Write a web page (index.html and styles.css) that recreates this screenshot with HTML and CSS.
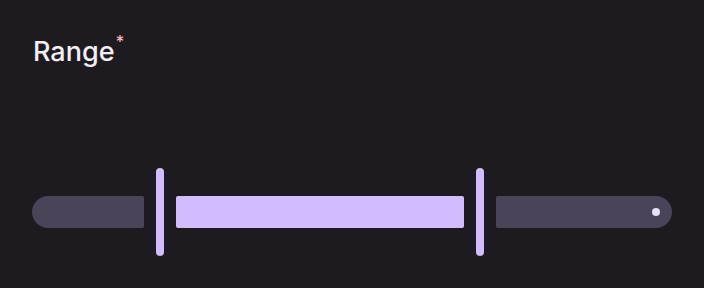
FILE: index.html
```html
<!DOCTYPE html>
<html>
<head>
<meta charset="utf-8">
<link rel="stylesheet" href="styles.css">
</head>
<body>
<div class="page">
  <div class="label">Range<span class="req">*</span></div>
  <div class="slider">
    <div class="track inactive left"></div>
    <div class="handle"></div>
    <div class="track active"></div>
    <div class="handle"></div>
    <div class="track inactive right"><span class="stop"></span></div>
  </div>
</div>
</body>
</html>
```
FILE: styles.css
```css
html, body {
  margin: 0;
  padding: 0;
  background: #1D1B20;
}
.page {
  width: 704px;
  height: 288px;
  box-sizing: border-box;
  padding: 34px 32px 0 32px;
  font-family: Inter, Roboto, "Noto Sans", sans-serif;
}
.label {
  color: #F4EFF4;
  font-size: 27px;
  font-weight: 500;
  line-height: 36px;
  padding-left: 1px;
}
.req {
  color: #F2B8B5;
  font-size: 17px;
  line-height: 0;
  vertical-align: 13px;
  margin-left: 1px;
}
.slider {
  margin-top: 98px;
  display: flex;
  align-items: center;
  gap: 12px;
  height: 88px;
}
.track {
  height: 32px;
  border-radius: 2px;
}
.inactive {
  background: #4A4458;
}
.left {
  width: 112px;
  border-radius: 16px 2px 2px 16px;
}
.right {
  width: 176px;
  border-radius: 2px 16px 16px 2px;
  display: flex;
  align-items: center;
  justify-content: flex-end;
  padding-right: 12px;
  box-sizing: border-box;
}
.active {
  width: 288px;
  background: #D0BCFF;
}
.handle {
  width: 8px;
  height: 88px;
  border-radius: 4px;
  background: #D0BCFF;
}
.stop {
  width: 8px;
  height: 8px;
  border-radius: 50%;
  background: #E8DEF8;
}
```
